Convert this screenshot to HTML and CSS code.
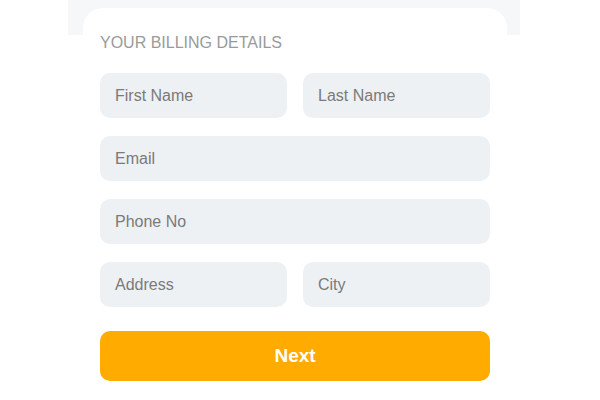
FILE: index.html
```html
<!DOCTYPE html>
<html>
<head>
<meta charset="utf-8">
<link rel="stylesheet" href="styles.css">
</head>
<body>
<div class="backdrop">
  <form class="card">
    <h2 class="title">YOUR BILLING DETAILS</h2>
    <div class="row two">
      <div class="field">First Name</div>
      <div class="field">Last Name</div>
    </div>
    <div class="row">
      <div class="field">Email</div>
    </div>
    <div class="row">
      <div class="field">Phone No</div>
    </div>
    <div class="row two">
      <div class="field">Address</div>
      <div class="field">City</div>
    </div>
    <button type="button" class="next">Next</button>
  </form>
</div>
</body>
</html>
```
FILE: styles.css
```css
html, body {
  margin: 0;
  padding: 0;
  background: #ffffff;
  font-family: "Liberation Sans", Arial, sans-serif;
}
.backdrop {
  margin-left: 68px;
  width: 452px;
  padding-top: 8px;
  background: linear-gradient(#f6f7f9 0, #f6f7f9 35px, #ffffff 35px);
}
.card {
  margin: 0 13px 0 15px;
  background: #ffffff;
  border-radius: 20px 20px 0 0;
  padding: 26px 17px 20px 17px;
  display: flex;
  flex-direction: column;
  gap: 18px;
}
.title {
  margin: 0 0 3px 0;
  font-size: 16px;
  font-weight: normal;
  color: #9a9a9a;
  line-height: 18px;
}
.row {
  display: grid;
  grid-template-columns: 1fr;
  gap: 16px;
}
.row.two {
  grid-template-columns: 1fr 1fr;
}
.field {
  height: 45px;
  border-radius: 10px;
  background: #eef1f4;
  color: #7a7a7a;
  font-size: 16px;
  line-height: 45px;
  padding-left: 15px;
}
.next {
  margin-top: 6px;
  height: 50px;
  border: none;
  border-radius: 10px;
  background: #ffab00;
  color: #ffffff;
  font-family: "Liberation Sans", Arial, sans-serif;
  font-weight: bold;
  font-size: 19px;
}
```
